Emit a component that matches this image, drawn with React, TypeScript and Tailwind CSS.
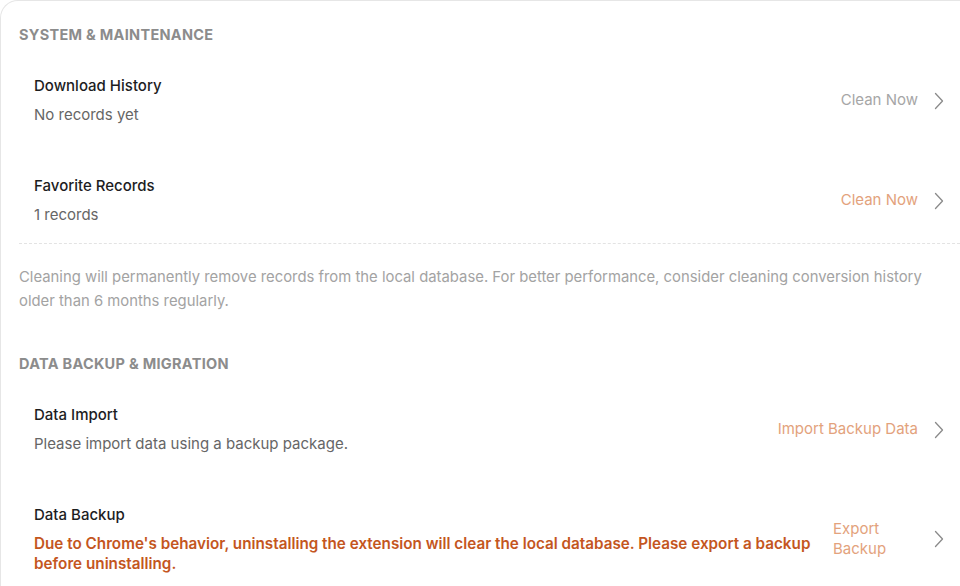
const Chevron = () => (
  <svg width="10" height="18" viewBox="0 0 10 18" fill="none" className="shrink-0">
    <polyline points="1.5,1.5 8.5,9 1.5,16.5" stroke="#8a8a8a" strokeWidth="1.3" strokeLinecap="round" strokeLinejoin="round" />
  </svg>
)

type RowProps = {
  title: string
  desc: React.ReactNode
  action: React.ReactNode
  actionClass: string
}

function Row({ title, desc, action, actionClass }: RowProps) {
  return (
    <div className="flex items-center pb-[17px] pl-[15px] pt-[19px]">
      <div className="min-w-0 flex-1 pr-[20px]">
        <div className="text-[15px] font-medium leading-[22px] text-[#1d1d1f]">{title}</div>
        <div className="mt-[5px]">{desc}</div>
      </div>
      <div className="flex items-center gap-[16px]">
        <span className={actionClass}>{action}</span>
        <Chevron />
      </div>
    </div>
  )
}

export default function App() {
  return (
    <div className="h-[586px] w-[960px] overflow-hidden bg-white"
      style={{ fontFamily: 'Inter, "Noto Sans", sans-serif' }}>
      <div className="h-full w-[980px] rounded-tl-[18px] border-l border-t border-[#e6e6e6] pl-[18px] pr-[36px] pt-[24px]">

        <h2 className="text-[14.5px] font-bold leading-5 tracking-[0.02em] text-[#8c8c8c]">
          SYSTEM &amp; MAINTENANCE
        </h2>

        <div className="mt-[11px] flex flex-col gap-[13px]">
          <Row
            title="Download History"
            desc={<span className="text-[15px] leading-[22px] text-[#666]">No records yet</span>}
            action="Clean Now"
            actionClass="text-[15px] text-[#a6a6a6]"
          />
          <Row
            title="Favorite Records"
            desc={<span className="text-[15px] leading-[22px] text-[#666]">1 records</span>}
            action="Clean Now"
            actionClass="text-[15px] text-[#e3a27c]"
          />
        </div>

        {/* dashed divider runs to the card's edge */}
        <div className="-mr-[36px] border-b border-dashed border-[#e3e3e3]" />

        <p className="mt-[21px] w-[920px] text-[14.85px] leading-6 text-[#a3a3a3]">
          Cleaning will permanently remove records from the local database. For better performance, consider cleaning conversion history older than 6 months regularly.
        </p>

        <h2 className="mt-[41px] text-[14.5px] font-bold leading-5 tracking-[0.02em] text-[#8c8c8c]">
          DATA BACKUP &amp; MIGRATION
        </h2>

        <div className="mt-[11px] flex flex-col gap-[13px]">
          <Row
            title="Data Import"
            desc={<span className="text-[15px] leading-[22px] text-[#666]">Please import data using a backup package.</span>}
            action="Import Backup Data"
            actionClass="text-[15px] text-[#e3a27c]"
          />
          <Row
            title="Data Backup"
            desc={
              <span className="mt-[8px] block text-[15.25px] font-semibold leading-5 text-[#c4561e]">
                Due to Chrome's behavior, uninstalling the extension will clear the local database. Please export a backup before uninstalling.
              </span>
            }
            action="Export Backup"
            actionClass="block w-[85px] text-[15px] leading-5 text-[#e3a27c]"
          />
        </div>

      </div>
    </div>
  )
}
